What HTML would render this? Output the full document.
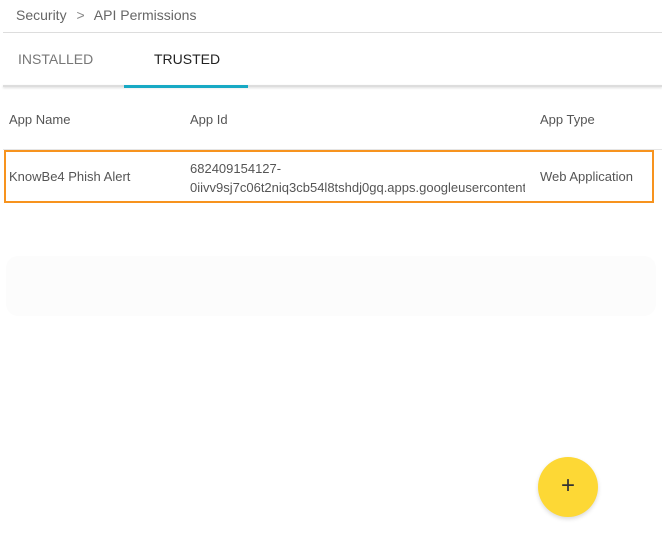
<!DOCTYPE html>
<html><head><meta charset="utf-8"><style>
*{margin:0;padding:0;box-sizing:border-box}
body{width:662px;height:534px;background:#fff;font-family:"Liberation Sans",sans-serif;color:#555;position:relative;overflow:hidden}
.abs{position:absolute;white-space:nowrap}
</style></head><body>
<div class="abs" style="left:16px;top:7px;font-size:14px;color:#666">Security <span style="margin:0 6px;color:#888">&gt;</span> API Permissions</div>
<div class="abs" style="left:3px;top:32px;width:659px;height:1px;background:#ddd"></div>
<div class="abs" style="left:18px;top:51px;font-size:14px;color:#777">INSTALLED</div>
<div class="abs" style="left:154px;top:51px;font-size:14px;color:#222">TRUSTED</div>
<div class="abs" style="left:3px;top:85px;width:659px;height:2px;background:#ddd;box-shadow:0 1px 2px rgba(0,0,0,0.15)"></div>
<div class="abs" style="left:124px;top:85px;width:124px;height:3px;background:#17a9c4"></div>
<div class="abs" style="left:9px;top:112px;font-size:13px;color:#555">App Name</div>
<div class="abs" style="left:190px;top:112px;font-size:13px;color:#555">App Id</div>
<div class="abs" style="left:540px;top:112px;font-size:13px;color:#555">App Type</div>
<div class="abs" style="left:3px;top:149px;width:659px;height:1px;background:#e5e5e5"></div>
<div class="abs" style="left:4px;top:150px;width:650px;height:53px;border:2px solid #f7931e"></div>
<div class="abs" style="left:9px;top:169px;font-size:13px;color:#555">KnowBe4 Phish Alert</div>
<div class="abs" style="left:190px;top:159px;font-size:13px;color:#555;line-height:19px">682409154127-<br>0iivv9sj7c06t2niq3cb54l8tshdj0gq.apps.googleusercontent</div>
<div class="abs" style="left:525px;top:150px;width:15px;height:53px;background:#fff;border-top:2px solid #f7931e;border-bottom:2px solid #f7931e"></div>
<div class="abs" style="left:540px;top:169px;font-size:13px;color:#555">Web Application</div>
<div class="abs" style="left:6px;top:256px;width:650px;height:60px;background:#fcfcfc;border-radius:12px"></div>
<div class="abs" style="left:538px;top:457px;width:60px;height:60px;border-radius:50%;background:#fdd835;box-shadow:0 2px 4px rgba(0,0,0,0.15);text-align:center;line-height:58px;font-size:24px;color:#333">+</div>
</body></html>
